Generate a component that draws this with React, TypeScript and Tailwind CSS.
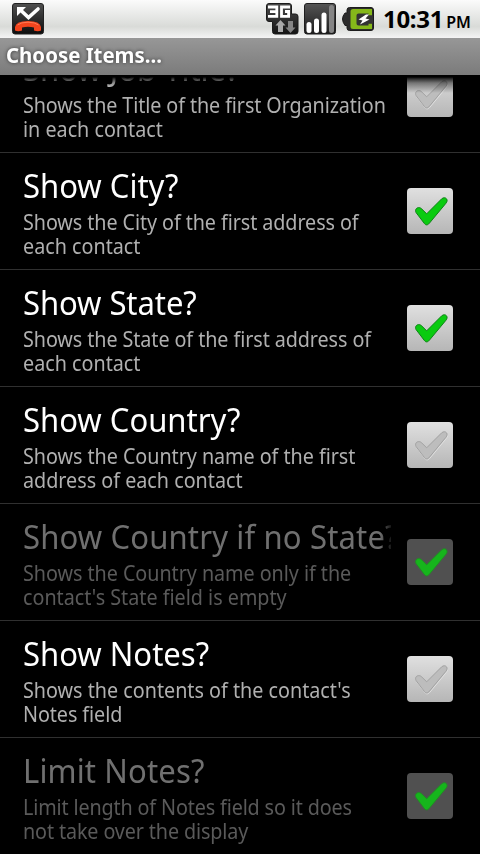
import { clsx } from "clsx";

type SummaryLine = {
  text: string;
  tracking?: string;
};

type Preference = {
  title: string;
  summary: SummaryLine[];
  checked: boolean;
  disabled?: boolean;
  titleTracking?: string;
};

const PREFERENCES: Preference[] = [
  {
    title: "Show Job Title?",
    summary: [
      { text: "Shows the Title of the first Organization", tracking: "tracking-[-0.1px]" },
      { text: "in each contact" },
    ],
    checked: false,
  },
  {
    title: "Show City?",
    summary: [
      { text: "Shows the City of the first address of", tracking: "tracking-[-0.08px]" },
      { text: "each contact" },
    ],
    checked: true,
  },
  {
    title: "Show State?",
    titleTracking: "tracking-[-0.08px]",
    summary: [
      { text: "Shows the State of the first address of", tracking: "tracking-[-0.08px]" },
      { text: "each contact" },
    ],
    checked: true,
  },
  {
    title: "Show Country?",
    summary: [
      { text: "Shows the Country name of the first", tracking: "tracking-[-0.04px]" },
      { text: "address of each contact" },
    ],
    checked: false,
  },
  {
    title: "Show Country if no State?",
    titleTracking: "tracking-[0.16px]",
    summary: [
      { text: "Shows the Country name only if the", tracking: "tracking-[-0.04px]" },
      { text: "contact's State field is empty" },
    ],
    checked: true,
    disabled: true,
  },
  {
    title: "Show Notes?",
    summary: [{ text: "Shows the contents of the contact's" }, { text: "Notes field", tracking: "tracking-[-0.08px]" }],
    checked: false,
  },
  {
    title: "Limit Notes?",
    titleTracking: "tracking-[0.15px]",
    summary: [
      { text: "Limit length of Notes field so it does", tracking: "tracking-[-0.14px]" },
      { text: "not take over the display", tracking: "tracking-[-0.12px]" },
    ],
    checked: true,
    disabled: true,
  },
];

// tapered tick: slim at both tips, widest at the bottom corner
const CHECK_PATH =
  "M9 24.500C7.800 22 9.200 19.800 11.500 19.600C13 19.500 14 20.200 15 21.200L19.700 25.800L34.700 10.800C36.500 9.300 38.500 9.400 39.600 10.900C40.500 12.300 40.100 13.800 39 15.200L22.300 35.300C20.500 37.400 18.700 37.400 17.300 35.400Z";

function MissedCallIcon() {
  return (
    <svg width="32" height="32" viewBox="0 0 32 32">
      <defs>
        <linearGradient id="call" x1="0" y1="0" x2="0" y2="1">
          <stop offset="0" stopColor="#505050" />
          <stop offset="1" stopColor="#0c0c0c" />
        </linearGradient>
      </defs>
      <rect x="0.5" y="0.5" width="31" height="30.5" rx="2.5" fill="url(#call)" stroke="#222" />
      <path d="M9 7.500L16.500 14.500L26 6" fill="none" stroke="#fff" strokeWidth="3.600" strokeLinecap="round" />
      <path d="M5 4H14L5 13Z" fill="#fff" />
      <path
        d="M3 27.500V24Q4 18 16 18Q28 18 29 24V27.500Q26 29 22 27.500V24.500Q16 23 10 24.500V27.500Q6 29 3 27.500Z"
        fill="#f2441d"
      />
      <path d="M5.500 22Q9 19.200 16 19.200Q23 19.200 26.500 22" fill="none" stroke="#ff7a55" strokeWidth="1" />
    </svg>
  );
}

function NetworkIcon() {
  return (
    <svg width="33" height="32" viewBox="0 0 33 32">
      <defs>
        <linearGradient id="network" x1="0" y1="0" x2="0" y2="1">
          <stop offset="0" stopColor="#4a4a4a" />
          <stop offset="1" stopColor="#141414" />
        </linearGradient>
      </defs>
      <path
        d="M3 .5H23Q25.500 .5 25.500 3V11H29.500Q32 11 32 13.500V28.500Q32 31 29.500 31H9Q6.500 31 6.500 28.500V18.500H3Q.5 18.500 .5 16V3Q.5 .5 3 .5Z"
        fill="url(#network)"
        stroke="#1b1b1b"
      />
      <path d="M2 4H10.800V13.400H2M4 8.700H10" fill="none" stroke="#fff" strokeWidth="2.800" />
      <path d="M24 4H15.500V13.400H22.600V8.500H19" fill="none" stroke="#fff" strokeWidth="2.800" />
      <path d="M14.500 17L19.500 22.500H17V29H12V22.500H9.500Z" fill="#aaa" />
      <path d="M24.500 30L19.500 24.500H22V18H27V24.500H29.500Z" fill="#858585" />
    </svg>
  );
}

function SignalIcon() {
  return (
    <svg width="32" height="32" viewBox="0 0 32 32">
      <defs>
        <linearGradient id="signal" x1="0" y1="0" x2="0" y2="1">
          <stop offset="0" stopColor="#555" />
          <stop offset="1" stopColor="#1a1a1a" />
        </linearGradient>
      </defs>
      <rect x="0.5" y="0.5" width="31" height="30.5" rx="2.5" fill="url(#signal)" stroke="#1e1e1e" />
      <rect x="2.500" y="19" width="5" height="11" rx="2.500" fill="#fff" />
      <rect x="10" y="15.500" width="5" height="14.500" rx="2.500" fill="#fff" />
      <rect x="17.500" y="9.500" width="5" height="20.500" rx="2.500" fill="#fff" />
      <rect x="25" y="2" width="5" height="28" rx="2.500" fill="#858585" />
    </svg>
  );
}

function BatteryIcon() {
  return (
    <svg width="32" height="24" viewBox="0 0 32 24">
      <path
        d="M7.500 .5H29Q31.500 .5 31.500 3V21Q31.500 23.500 29 23.500H7.500Q5 23.500 5 21V18.500H3Q.5 15 .5 12Q.5 9 3 6H5V3Q5 .5 7.500 .5Z"
        fill="#2b2b2b"
        stroke="#1c1c1c"
      />
      <path d="M11 2H30V8.500H16V16.500H30V22H11Q8.500 22 8.500 19.500V4.500Q8.500 2 11 2Z" fill="#85b81a" />
      <path d="M16.500 6.500H26.500V8.500H31V16.500H26.500V18.500H16.500Q14.500 18.500 14.500 16.500V8.500Q14.500 6.500 16.500 6.500Z" fill="#333" />
      <path d="M24 7.500L16.500 12.500L20.500 13.500L18 17.500L27.500 12.500L23.500 11.500L27 7.500Z" fill="#fff" />
    </svg>
  );
}

function StatusBar() {
  return (
    <header className="flex h-[38px] shrink-0 items-center bg-linear-to-b from-[#fbfbfb] via-[#d9dbd8] via-70% to-[#f4f4f4] pl-3">
      <MissedCallIcon />
      <div className="ml-[222px] flex items-center">
        <NetworkIcon />
        <div className="ml-[5px]">
          <SignalIcon />
        </div>
        <div className="ml-1.5">
          <BatteryIcon />
        </div>
      </div>
      <div className="ml-[9px] flex items-baseline whitespace-nowrap text-black">
        <span className="text-2xl leading-[38px] font-bold tracking-[-0.3px]">10:31</span>
        <span className="ml-[3px] text-base font-semibold">PM</span>
      </div>
    </header>
  );
}

function Checkbox({ checked, disabled }: { checked: boolean; disabled?: boolean }) {
  return (
    <div
      className={clsx(
        "size-[46px] shrink-0 rounded-[4px]",
        disabled ? "bg-[#505050]" : "bg-linear-to-b from-[#e0e0e0] to-[#b6b6b6]",
      )}
    >
      <svg width="46" height="46" viewBox="0 0 46 46">
        {checked ? (
          <path d={CHECK_PATH} fill={disabled ? "#16b51c" : "#0acb10"} stroke={disabled ? "#238b25" : "#12811a"} />
        ) : (
          <>
            <path d={CHECK_PATH} fill="none" stroke="#e0e0e0" transform="translate(0.5 1)" />
            <path d={CHECK_PATH} fill="#bdbdbd" stroke="#a2a2a2" />
          </>
        )}
      </svg>
    </div>
  );
}

function PreferenceRow({ title, titleTracking, summary, checked, disabled }: Preference) {
  return (
    <li className="flex h-[117px] shrink-0 items-start border-b border-[#303030] pr-[27px] pl-[23px]">
      <div className="w-[368px] shrink-0 pt-2.5 whitespace-nowrap">
        <div className="overflow-hidden [mask-image:linear-gradient(to_right,black_357px,transparent_371px)]">
          <h2
            className={clsx(
              "w-max origin-left scale-x-[0.94] text-[33px] leading-[45px]",
              titleTracking,
              disabled ? "text-[#707070]" : "text-white",
            )}
          >
            {title}
          </h2>
        </div>
        <div className={clsx("mt-0.5 text-[21px] leading-6", disabled ? "text-[#5a5a5a]" : "text-[#b0b0b0]")}>
          {summary.map((line) => (
            <p key={line.text} className={clsx("w-max origin-left scale-x-[0.94]", line.tracking)}>
              {line.text}
            </p>
          ))}
        </div>
      </div>
      <div className="mt-[35px] ml-4">
        <Checkbox checked={checked} disabled={disabled} />
      </div>
    </li>
  );
}

export default function App() {
  return (
    <div className="flex h-[854px] w-[480px] flex-col overflow-hidden bg-black font-['Noto_Sans',sans-serif]">
      <StatusBar />
      <div className="flex h-[37px] shrink-0 items-center bg-linear-to-b from-[#979797] to-[#7b7b7b] pb-[3px] pl-1.5">
        <h1 className="origin-left scale-x-[0.972] text-[21px] leading-6 font-bold whitespace-nowrap text-white [text-shadow:0_0_4px_#333]">
          Choose Items...
        </h1>
      </div>
      <main className="relative min-h-0 flex-1 overflow-hidden">
        <ul className="-mt-[39px] flex flex-col">
          {PREFERENCES.map((preference) => (
            <PreferenceRow key={preference.title} {...preference} />
          ))}
        </ul>
        <div className="absolute inset-x-0 top-0 h-[18px] bg-[linear-gradient(#000_2px,rgb(0_0_0/0.78)_4px,rgb(0_0_0/0.45)_8px,transparent_18px)]" />
      </main>
    </div>
  );
}
